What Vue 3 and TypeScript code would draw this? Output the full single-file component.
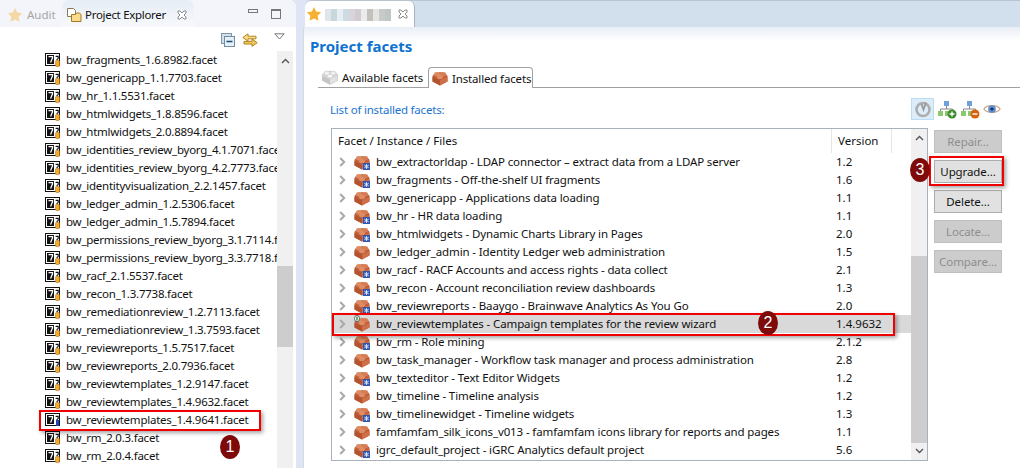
<template>
  <div class="page">
    <svg class="defs" width="0" height="0" aria-hidden="true">
      <defs>
        <symbol id="brick" viewBox="0 0 16 16">
          <path d="M.5 6.500Q.5 5 2 4.300L8 2l6 2.300Q15.500 5 15.500 6.500v5L8 15.500.5 11.500z" fill="#c2603a" />
          <path d="M.5 7 8 10.500v5L.5 11.500z" fill="#b35430" />
          <path d="M8 10.500 15.500 7v4.500L8 15.500z" fill="#cf6f47" />
          <ellipse cx="5" cy="4.300" rx="3" ry="2.200" fill="#dd8a62" />
          <ellipse cx="11" cy="4.300" rx="3" ry="2.200" fill="#d77c55" />
          <ellipse cx="8" cy="7" rx="3" ry="2" fill="#de8d66" />
        </symbol>
        <symbol id="brickgrey" viewBox="0 0 16 16">
          <path d="M.5 6.500Q.5 5 2 4.300L8 2l6 2.300Q15.500 5 15.500 6.500v5L8 15.500.5 11.500z" fill="#d8d8d8" stroke="#b4b4b4" stroke-width=".6" />
          <path d="M.8 7 8 10.500v4.700L.8 11.500z" fill="#c4c4c4" />
          <path d="M8 10.500 15.200 7v4.500L8 15.200z" fill="#e2e2e2" />
          <ellipse cx="5" cy="4.300" rx="3" ry="2.200" fill="#f2f2f2" stroke="#bbb" stroke-width=".5" />
          <ellipse cx="11" cy="4.300" rx="3" ry="2.200" fill="#eee" stroke="#bbb" stroke-width=".5" />
          <ellipse cx="8" cy="7" rx="3" ry="2" fill="#f6f6f6" stroke="#bbb" stroke-width=".5" />
        </symbol>
        <symbol id="badge" viewBox="0 0 7 7">
          <rect width="7" height="7" fill="#2f55b5" />
          <path d="M3.500 1v5M1.300 2.200l4.400 2.600M5.700 2.200 1.300 4.800" stroke="#e8eefc" stroke-width=".9" />
        </symbol>
        <symbol id="facetfile" viewBox="0 0 16 16">
          <rect x=".5" y="1.500" width="14" height="12" fill="#fff" stroke="#111" />
          <rect x="2" y="3" width="7" height="9" fill="#111" />
          <path d="M3.500 4.600h4v1.300L5.600 10.400" fill="none" stroke="#fff" stroke-width="1.300" />
          <path d="M10.600 4.400h2.600v2l-1.600 1.400" fill="none" stroke="#111" stroke-width="1.100" />
        </symbol>
      </defs>
    </svg>

    <section class="explorer">
      <header class="viewbar">
        <div class="vtab off">
          <svg class="star" viewBox="0 0 16 16"><path d="M8 1l2.200 4.600 5 .7-3.600 3.500.9 5L8 12.400l-4.500 2.400.9-5L.8 6.300l5-.7z" fill="#f4d7a4" /></svg>
          <span>Audit</span>
        </div>
        <div class="vtab on">
          <svg class="ico16" viewBox="0 0 16 16">
            <path d="M1.500 1.500h6l2 2v6h-8z" fill="#fff" stroke="#8a7a55" />
            <path d="M5.500 7.500h4l1-1.500h3l1.500 1.500v7h-9.500z" fill="#f8dc8c" stroke="#a27a26" />
          </svg>
          <span>Project Explorer</span>
          <svg class="close" viewBox="0 0 10 10"><path d="M1 1l2 0 2 2 2-2 2 0 0 2-2 2 2 2 0 2-2 0-2-2-2 2-2 0 0-2 2-2-2-2z" fill="#fff" stroke="#8b8b8b" /></svg>
        </div>
        <div class="winbtns">
          <span class="minbtn"></span>
          <span class="maxbtn"></span>
        </div>
      </header>
      <div class="viewtools">
        <svg class="t1" viewBox="0 0 14 14">
          <rect x=".5" y=".5" width="10" height="10" fill="#d3e0ec" stroke="#7b97ae" />
          <rect x="3.500" y="3.500" width="10" height="10" fill="#e8f0f7" stroke="#6f8ca5" />
          <path d="M5.500 8.500h6" stroke="#14497a" stroke-width="1.500" />
        </svg>
        <svg class="t2" viewBox="0 0 16 14">
          <path d="M6 .8v2.400h8v2.600H6v2.400L.8 4.500z" fill="#f6d98b" stroke="#b58a1e" />
          <path d="M10 6v2.400H2V11h8v2.400l5.200-3.700z" fill="#f2c75c" stroke="#b0821a" />
        </svg>
        <svg class="t3" viewBox="0 0 11 7"><path d="M.8.800h9.400L5.500 6z" fill="#fff" stroke="#777" /></svg>
      </div>
      <div class="tree">
        <ul class="files">
          <li v-for="f in files" :key="f" class="file">
            <span class="fileico">
              <svg viewBox="0 0 16 16"><use href="#facetfile" /></svg>
              <svg v-if="f !== marked" class="can" viewBox="0 0 5 7"><rect x=".5" y=".5" width="4" height="6" rx="1" fill="#f2a92c" stroke="#b5761a" stroke-width=".6" /></svg>
              <span v-else class="q"></span>
            </span>
            <span class="fname">{{ f }}</span>
          </li>
        </ul>
        <div class="vscroll left">
          <svg class="arrow" viewBox="0 0 9 6"><path d="M1 5l3.500-3.500L8 5" fill="none" stroke="#555" stroke-width="1.400" /></svg>
          <div class="thumb"></div>
        </div>
      </div>
    </section>

    <section class="editor">
      <header class="edbar">
        <div class="edtab">
          <svg class="star" viewBox="0 0 16 16"><path d="M8 1l2.200 4.600 5 .7-3.600 3.500.9 5L8 12.400l-4.500 2.400.9-5L.8 6.300l5-.7z" fill="#f5b133" /></svg>
          <div class="blur">
            <i v-for="(c, i) in blurred" :key="i" :style="{ background: c }"></i>
          </div>
          <svg class="close" viewBox="0 0 10 10"><path d="M1 1l2 0 2 2 2-2 2 0 0 2-2 2 2 2 0 2-2 0-2-2-2 2-2 0 0-2 2-2-2-2z" fill="#fff" stroke="#8b8b8b" /></svg>
        </div>
      </header>
      <div class="edbody">
        <h1>Project facets</h1>
        <div class="subtabs">
          <div class="stab">
            <svg class="ico16" viewBox="0 0 16 16"><use href="#brickgrey" /></svg>
            <span>Available facets</span>
          </div>
          <div class="stab active">
            <svg class="ico16" viewBox="0 0 16 16"><use href="#brick" /></svg>
            <span>Installed facets</span>
          </div>
        </div>
        <div class="listhead">
          <span class="listlabel">List of installed facets:</span>
          <div class="acttools">
            <span class="act on">
              <svg viewBox="0 0 20 20"><circle cx="10" cy="10.500" r="6.500" fill="none" stroke="#adadad" stroke-width="2.600" /><path d="M8.500 5l2 5.500 2.500-7" fill="none" stroke="#9a9a9a" stroke-width="1.800" /></svg>
            </span>
            <span class="act">
              <svg viewBox="0 0 20 20"><rect x="7" y="2" width="5" height="5" fill="#6fa0dc" /><path d="M9.500 7v3M3.500 13v-3h12v3" fill="none" stroke="#888" /><rect x="1" y="12" width="5" height="5" fill="#8cc96e" /><rect x="8" y="12" width="5" height="5" fill="#8cc96e" /><circle cx="15" cy="15" r="4.500" fill="#3c8b2c" /><path d="M12.500 15h5M15 12.500v5" stroke="#fff" stroke-width="1.400" /></svg>
            </span>
            <span class="act">
              <svg viewBox="0 0 20 20"><rect x="7" y="2" width="5" height="5" fill="#6fa0dc" /><path d="M9.500 7v3M3.500 13v-3h12v3" fill="none" stroke="#888" /><rect x="1" y="12" width="5" height="5" fill="#8cc96e" /><rect x="8" y="12" width="5" height="5" fill="#8cc96e" /><circle cx="15" cy="15" r="4.500" fill="#d9620f" /><path d="M12.500 15h5" stroke="#fff" stroke-width="1.400" /></svg>
            </span>
            <span class="act eye">
              <svg viewBox="0 0 20 20"><path d="M1 10c3-5 15-5 18 0-3 5-15 5-18 0z" fill="#fff" stroke="#c9a489" stroke-width="1.400" /><circle cx="10" cy="10" r="4.300" fill="#5d8fd0" /><circle cx="10" cy="10" r="1.800" fill="#16325e" /></svg>
            </span>
          </div>
        </div>
        <div class="workarea">
          <div class="table">
            <div class="tablemain">
              <div class="thead">
                <div class="col-name">Facet / Instance / Files</div>
                <div class="col-ver">Version</div>
                <div class="col-rest"></div>
              </div>
              <div v-for="r in facets" :key="r.name" class="row" :class="{ sel: r.sel }">
                <svg class="chev" viewBox="0 0 7 10"><path d="M1.200 1l4 4-4 4" fill="none" stroke="#a8a8a8" stroke-width="2" /></svg>
                <span class="brick">
                  <svg viewBox="0 0 16 16"><use href="#brick" /></svg>
                  <svg v-if="r.badge" class="snow" viewBox="0 0 7 7"><use href="#badge" /></svg>
                  <svg v-if="r.sel" class="bulb" viewBox="0 0 6 8"><ellipse cx="3" cy="3.500" rx="2.500" ry="3.200" fill="#fff" stroke="#234" stroke-width=".7" /><path d="M3 1.500v4" stroke="#2d8a2d" stroke-width="1.400" /></svg>
                </span>
                <span class="rname">{{ r.name }}</span>
                <span class="rver">{{ r.ver }}</span>
              </div>
            </div>
            <div class="vscroll right">
              <svg class="arrow" viewBox="0 0 9 6"><path d="M1 5l3.500-3.500L8 5" fill="none" stroke="#555" stroke-width="1.400" /></svg>
              <div class="thumb"></div>
              <svg class="arrow down" viewBox="0 0 9 6"><path d="M1 1l3.500 3.500L8 1" fill="none" stroke="#555" stroke-width="1.400" /></svg>
            </div>
          </div>
          <div class="buttons">
            <button v-for="b in buttons" :key="b.label" :disabled="b.off">{{ b.label }}</button>
          </div>
        </div>
      </div>
    </section>

    <div class="mark m1"></div>
    <div class="mark m2"></div>
    <div class="mark m3"></div>
    <div class="num n1">1</div>
    <div class="num n2">2</div>
    <div class="num n3">3</div>
  </div>
</template>

<script setup lang="ts">
interface Facet {
  name: string
  ver: string
  badge?: boolean
  sel?: boolean
}

const marked = 'bw_reviewtemplates_1.4.9641.facet'

const files: string[] = [
  'bw_fragments_1.6.8982.facet',
  'bw_genericapp_1.1.7703.facet',
  'bw_hr_1.1.5531.facet',
  'bw_htmlwidgets_1.8.8596.facet',
  'bw_htmlwidgets_2.0.8894.facet',
  'bw_identities_review_byorg_4.1.7071.facet',
  'bw_identities_review_byorg_4.2.7773.facet',
  'bw_identityvisualization_2.2.1457.facet',
  'bw_ledger_admin_1.2.5306.facet',
  'bw_ledger_admin_1.5.7894.facet',
  'bw_permissions_review_byorg_3.1.7114.facet',
  'bw_permissions_review_byorg_3.3.7718.facet',
  'bw_racf_2.1.5537.facet',
  'bw_recon_1.3.7738.facet',
  'bw_remediationreview_1.2.7113.facet',
  'bw_remediationreview_1.3.7593.facet',
  'bw_reviewreports_1.5.7517.facet',
  'bw_reviewreports_2.0.7936.facet',
  'bw_reviewtemplates_1.2.9147.facet',
  'bw_reviewtemplates_1.4.9632.facet',
  marked,
  'bw_rm_2.0.3.facet',
  'bw_rm_2.0.4.facet',
]

const facets: Facet[] = [
  { name: 'bw_extractorldap - LDAP connector – extract data from a LDAP server', ver: '1.2', badge: true },
  { name: 'bw_fragments - Off-the-shelf UI fragments', ver: '1.6', badge: true },
  { name: 'bw_genericapp - Applications data loading', ver: '1.1' },
  { name: 'bw_hr - HR data loading', ver: '1.1', badge: true },
  { name: 'bw_htmlwidgets - Dynamic Charts Library in Pages', ver: '2.0', badge: true },
  { name: 'bw_ledger_admin - Identity Ledger web administration', ver: '1.5' },
  { name: 'bw_racf - RACF Accounts and access rights - data collect', ver: '2.1', badge: true },
  { name: 'bw_recon - Account reconciliation review dashboards', ver: '1.3', badge: true },
  { name: 'bw_reviewreports - Baaygo - Brainwave Analytics As You Go', ver: '2.0', badge: true },
  { name: 'bw_reviewtemplates - Campaign templates for the review wizard', ver: '1.4.9632', sel: true },
  { name: 'bw_rm - Role mining', ver: '2.1.2', badge: true },
  { name: 'bw_task_manager - Workflow task manager and process administration', ver: '2.8' },
  { name: 'bw_texteditor - Text Editor Widgets', ver: '1.2', badge: true },
  { name: 'bw_timeline - Timeline analysis', ver: '1.2' },
  { name: 'bw_timelinewidget - Timeline widgets', ver: '1.3', badge: true },
  { name: 'famfamfam_silk_icons_v013 - famfamfam icons library for reports and pages', ver: '1.1' },
  { name: 'igrc_default_project - iGRC Analytics default project', ver: '5.6', badge: true },
]

const buttons = [
  { label: 'Repair...', off: true },
  { label: 'Upgrade...', off: false },
  { label: 'Delete...', off: false },
  { label: 'Locate...', off: true },
  { label: 'Compare...', off: true },
]

const blurred = ['#dfe6ea', '#c9d6dc', '#e6eef3', '#cfdbe3', '#d9d4da', '#d2ccd2', '#ecebeb', '#c4c1bd', '#e4e4e2', '#c6cbc9', '#bfc6c6']
</script>

<style>
html, body { margin: 0; background: #dfe5f4; overflow: hidden; }
</style>

<style scoped>
.page {
  position: relative;
  width: 1020px;
  height: 468px;
  overflow: hidden;
  display: flex;
  gap: 7px;
  background: #dfe5f4;
  font-family: "Noto Sans", "Open Sans", sans-serif;
  font-size: 11.5px;
  color: #111;
}
.defs { position: absolute; }
svg { display: block; flex: none; }

.explorer {
  width: 296px;
  height: 468px;
  flex: none;
  display: flex;
  flex-direction: column;
  background: #fff;
  border-top-right-radius: 7px;
  overflow: hidden;
}
.viewbar {
  height: 27px;
  flex: none;
  display: flex;
  background: #f3f5fa;
  padding-left: 7px;
}
.vtab { display: flex; align-items: center; }
.vtab.off { width: 55px; gap: 4px; color: #a5a5a5; padding-top: 2px; }
.vtab.on {
  width: 132px;
  box-sizing: border-box;
  padding: 2px 0 0 4px;
  background: linear-gradient(#e6edf5, #f7f9fc);
  border-radius: 7px 7px 0 0;
}
.vtab.on span { margin-left: 3px; width: 92px; white-space: nowrap; letter-spacing: -.3px; }
.star { width: 16px; height: 16px; }
.ico16 { width: 16px; height: 16px; }
.close { width: 10px; height: 10px; }
.winbtns { margin-left: auto; display: flex; align-items: flex-start; gap: 13px; padding: 9px 15px 0 0; }
.minbtn { width: 8px; height: 2px; border: 1px solid #777; }
.maxbtn { width: 8px; height: 7px; border: 1px solid #777; border-top-width: 2px; }
.viewtools { height: 24px; flex: none; display: flex; align-items: center; padding-left: 221px; padding-top: 2px; box-sizing: border-box; }
.t1 { width: 14px; height: 14px; }
.t2 { width: 16px; height: 14px; margin-left: 7px; }
.t3 { width: 11px; height: 7px; margin-left: 16px; margin-top: -8px; }
.tree { flex: 1; display: flex; min-height: 0; }
.files { flex: none; width: 277px; margin: 0; padding: 0; list-style: none; overflow: hidden; }
.file {
  height: 18px;
  display: flex;
  align-items: center;
  padding-left: 45px;
  white-space: nowrap;
  line-height: 18px;
}
.fname { margin: -1px 0 0 5px; letter-spacing: -.24px; }
.fileico { position: relative; width: 16px; height: 16px; flex: none; }
.fileico svg:first-child { width: 16px; height: 16px; }
.can { position: absolute; right: 1px; bottom: 1px; width: 5px; height: 7px; }
.q { position: absolute; right: 2px; bottom: 2px; width: 3px; height: 6px; background: #2244bb; }

.vscroll { flex: none; width: 16px; display: flex; flex-direction: column; align-items: center; background: #f0f0f0; }
.vscroll.left .arrow { margin-top: 7px; }
.vscroll.left .thumb { margin-top: 202px; height: 81px; }
.arrow { width: 9px; height: 6px; flex: none; }
.thumb { width: 16px; background: #cdcdcd; flex: none; }
.arrow.down { margin-top: auto; margin-bottom: 6px; }

.editor { flex: 1; min-width: 0; display: flex; flex-direction: column; }
.edbar {
  height: 27px;
  flex: none;
  background: #d2dfed;
  border-top: 1px solid #b9c4cf;
  box-sizing: border-box;
  display: flex;
  margin-left: 2px;
  border-top-left-radius: 6px;
}
.edtab {
  width: 110px;
  height: 26px;
  background: #fff;
  border-right: 1px solid #a9b4c2;
  border-radius: 6px 6px 0 0;
  display: flex;
  align-items: center;
  padding-left: 1px;
  box-sizing: border-box;
}
.blur { display: flex; margin-left: 3px; height: 12px; margin-top: 1px; }
.blur i { width: 6px; height: 12px; display: block; }
.edtab .close { margin-left: 7px; }
.edbody {
  flex: 1;
  min-height: 0;
  border-left: 1px solid #d5dbe3;
  background: linear-gradient(#e9eef6 0, #fff 14px);
  padding-left: 6px;
}
h1 {
  margin: 0;
  padding-top: 8px;
  height: 24px;
  font-size: 15px;
  line-height: 22px;
  font-weight: 700;
  color: #0e72d0;
}
.subtabs {
  display: flex;
  margin: 8px 0 0 8px;
  height: 20px;
  border-bottom: 1px solid #a0a0a0;
}
.stab { display: flex; align-items: center; gap: 4px; height: 20px; box-sizing: border-box; white-space: nowrap; letter-spacing: -.15px; }
.stab:first-child { width: 110px; padding-left: 4px; }
.stab.active {
  width: 105px;
  padding-left: 3px;
  background: #fff;
  border: 1px solid #a0a0a0;
  border-bottom: 0;
  border-radius: 4px 4px 0 0;
  height: 21px;
}
.listhead { height: 40px; display: flex; align-items: center; padding-left: 21px; }
.listlabel { color: #1c74cf; padding-top: 3px; letter-spacing: -.2px; margin-left: -1px; }
.acttools { margin-left: auto; display: flex; gap: 3px; align-items: center; padding: 2px 19px 0 0; }
.act { width: 20px; height: 20px; display: block; }
.act.on { width: 23px; height: 22px; background: #dcecf9; outline: 1px solid #bcdcf4; outline-offset: -1px; display: flex; align-items: center; justify-content: center; }
.act svg { width: 20px; height: 20px; }
.act.eye { width: 18px; }
.act.eye svg { width: 18px; }
.workarea { display: flex; padding-left: 21px; }
.table {
  width: 597px;
  height: 333px;
  box-sizing: border-box;
  border: 1px solid #a8b2bc;
  display: flex;
  background: #fff;
}
.tablemain { flex: 1; min-width: 0; }
.thead { display: flex; height: 24px; line-height: 23px; }
.col-name { width: 500px; box-sizing: border-box; padding-left: 6px; border-right: 1px solid #e5e5e5; }
.col-ver { width: 60px; box-sizing: border-box; padding-left: 6px; border-right: 1px solid #e5e5e5; }
.row { height: 18px; display: flex; align-items: center; white-space: nowrap; }
.row.sel { background: #d9d9d9; }
.chev { width: 7px; height: 10px; margin-left: 7px; }
.brick { position: relative; width: 16px; height: 16px; margin-left: 8px; flex: none; }
.brick > svg:first-child { width: 16px; height: 16px; }
.snow { position: absolute; right: 0; bottom: 0; width: 7px; height: 7px; }
.bulb { position: absolute; left: 0; top: -1px; width: 6px; height: 8px; }
.rname { width: 456px; margin: -2px 0 0 6px; flex: none; overflow: hidden; letter-spacing: -.12px; }
.rver { margin: -2px 0 0 4px; }
.vscroll.right { height: 331px; }
.vscroll.right .arrow { margin-top: 6px; }
.vscroll.right .thumb { margin-top: 115px; height: 187px; }
.vscroll.right .arrow.down { margin-top: auto; margin-bottom: 6px; }
.buttons { display: flex; flex-direction: column; gap: 7px; margin-left: 6px; padding-top: 2px; }
button {
  width: 68px;
  height: 23px;
  padding: 0;
  font: inherit;
  letter-spacing: -.1px;
  color: #111;
  background: #e1e1e1;
  border: 1px solid #adadad;
}
button:disabled { color: #8e8e8e; background: #ccc; border-color: #bfbfbf; }

.mark {
  position: absolute;
  border: 2px solid #f00000;
  box-sizing: border-box;
  box-shadow: 2px 2px 4px rgba(0, 0, 0, .35);
}
.m1 { left: 39px; top: 410px; width: 222px; height: 21px; }
.m2 { left: 332px; top: 313px; width: 563px; height: 23px; }
.m3 { left: 929px; top: 156px; width: 75px; height: 30px; }
.num {
  position: absolute;
  width: 20px;
  height: 24px;
  border-radius: 50%;
  background: #7e0a0a;
  color: #fff;
  font-size: 16px;
  line-height: 24px;
  text-align: center;
  font-family: "Liberation Sans", sans-serif;
}
.n1 { left: 220px; top: 435px; }
.n2 { left: 758px; top: 311px; }
.n3 { left: 910px; top: 158px; }
</style>
